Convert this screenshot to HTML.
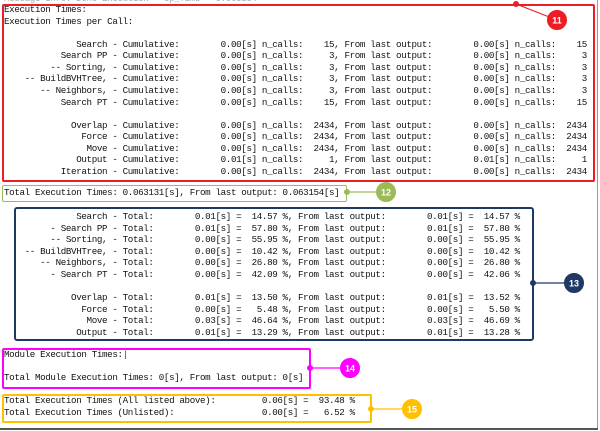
<!DOCTYPE html>
<html><head><meta charset="utf-8"><style>
html,body{margin:0;padding:0;background:#fff;width:600px;height:431px;overflow:hidden;position:relative}
pre{position:absolute;left:4px;margin:0;font-family:"Liberation Mono",monospace;font-size:9.2px;letter-spacing:-0.355px;line-height:11.55px;color:#111;white-space:pre}
.b{position:absolute;box-sizing:border-box}
</style></head><body>
<pre style="top:-7px;color:#aaa">Message Info: Done Execution   Up_Time   0.063154</pre>
<div class="b" style="left:2px;top:4px;width:593px;height:178px;border:2px solid #ee1c24;border-radius:2px"></div>
<pre style="top:4.2px">Execution Times:
Execution Times per Call:

              Search - Cumulative:        0.00[s] n_calls:    15, From last output:        0.00[s] n_calls:    15
           Search PP - Cumulative:        0.00[s] n_calls:     3, From last output:        0.00[s] n_calls:     3
         -- Sorting, - Cumulative:        0.00[s] n_calls:     3, From last output:        0.00[s] n_calls:     3
    -- BuildBVHTree, - Cumulative:        0.00[s] n_calls:     3, From last output:        0.00[s] n_calls:     3
       -- Neighbors, - Cumulative:        0.00[s] n_calls:     3, From last output:        0.00[s] n_calls:     3
           Search PT - Cumulative:        0.00[s] n_calls:    15, From last output:        0.00[s] n_calls:    15

             Overlap - Cumulative:        0.00[s] n_calls:  2434, From last output:        0.00[s] n_calls:  2434
               Force - Cumulative:        0.00[s] n_calls:  2434, From last output:        0.00[s] n_calls:  2434
                Move - Cumulative:        0.00[s] n_calls:  2434, From last output:        0.00[s] n_calls:  2434
              Output - Cumulative:        0.01[s] n_calls:     1, From last output:        0.01[s] n_calls:     1
           Iteration - Cumulative:        0.00[s] n_calls:  2434, From last output:        0.00[s] n_calls:  2434</pre>

<div class="b" style="left:2px;top:185px;width:345px;height:17px;border:1.5px solid #9bbb59;border-radius:2px"></div>
<pre style="top:187.2px">Total Execution Times: 0.063131[s], From last output: 0.063154[s]</pre>

<div class="b" style="left:14px;top:207px;width:520px;height:134px;border:2px solid #1f3864;border-radius:3px"></div>
<pre style="top:211.2px">              Search - Total:        0.01[s] =  14.57 %, From last output:        0.01[s] =  14.57 %
         - Search PP - Total:        0.01[s] =  57.80 %, From last output:        0.01[s] =  57.80 %
         -- Sorting, - Total:        0.00[s] =  55.95 %, From last output:        0.00[s] =  55.95 %
    -- BuildBVHTree, - Total:        0.00[s] =  10.42 %, From last output:        0.00[s] =  10.42 %
       -- Neighbors, - Total:        0.00[s] =  26.80 %, From last output:        0.00[s] =  26.80 %
         - Search PT - Total:        0.00[s] =  42.09 %, From last output:        0.00[s] =  42.06 %

             Overlap - Total:        0.01[s] =  13.50 %, From last output:        0.01[s] =  13.52 %
               Force - Total:        0.00[s] =   5.48 %, From last output:        0.00[s] =   5.50 %
                Move - Total:        0.03[s] =  46.64 %, From last output:        0.03[s] =  46.69 %
              Output - Total:        0.01[s] =  13.29 %, From last output:        0.01[s] =  13.28 %</pre>

<div class="b" style="left:2px;top:348px;width:309px;height:41px;border:2px solid #ff00ff;border-radius:2px"></div>
<pre style="top:349.2px">Module Execution Times:<span style="font-weight:100;color:#444">|</span>

Total Module Execution Times: 0[s], From last output: 0[s]</pre>

<div class="b" style="left:2px;top:394px;width:370px;height:29px;border:2px solid #ffc000;border-radius:2px"></div>
<pre style="top:395.2px">Total Execution Times (All listed above):         0.06[s] =  93.48 %
Total Execution Times (Unlisted):                 0.00[s] =   6.52 %</pre>

<div style="position:absolute;left:597px;top:0;width:1px;height:430px;background:#999"></div>
<div style="position:absolute;left:0;top:428px;width:598px;height:2px;background:#555"></div>

<svg width="600" height="431" style="position:absolute;left:0;top:0" font-family="Liberation Sans, sans-serif" font-size="9" font-weight="bold" text-anchor="middle">
<g fill="#ee1c24" stroke="#ee1c24"><line x1="516" y1="4" x2="557" y2="20" stroke-width="1.2"/><circle cx="516" cy="4" r="2.5"/><circle cx="557" cy="20" r="9.5"/></g>
<text x="557" y="23.5" fill="#fff">11</text>
<g fill="#9bbb59" stroke="#9bbb59"><line x1="347" y1="192" x2="386" y2="192" stroke-width="1.2"/><circle cx="347" cy="192" r="2.5"/><circle cx="386" cy="192" r="9.5"/></g>
<text x="386" y="195.5" fill="#fff">12</text>
<g fill="#1f3864" stroke="#1f3864"><line x1="533" y1="283" x2="574" y2="283" stroke-width="1.2"/><circle cx="533" cy="283" r="2.5"/><circle cx="574" cy="283" r="9.5"/></g>
<text x="574" y="286.5" fill="#fff">13</text>
<g fill="#ff00ff" stroke="#ff00ff"><line x1="310" y1="368" x2="350" y2="368" stroke-width="1.2"/><circle cx="310" cy="368" r="2.5"/><circle cx="350" cy="368" r="9.5"/></g>
<text x="350" y="371.5" fill="#fff">14</text>
<g fill="#ffc000" stroke="#ffc000"><line x1="371" y1="409" x2="412" y2="409" stroke-width="1.2"/><circle cx="371" cy="409" r="2.5"/><circle cx="412" cy="409" r="9.5"/></g>
<text x="412" y="412.5" fill="#fff">15</text>
</svg>
</body></html>
